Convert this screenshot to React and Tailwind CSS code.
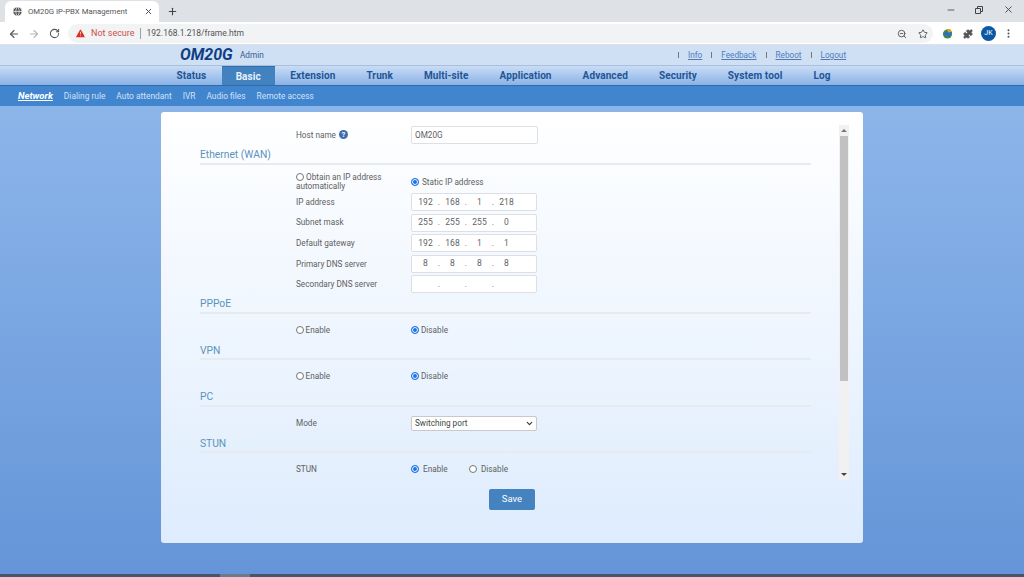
import React from 'react';
import { ArrowLeft, ArrowRight, RotateCw, ZoomOut, Star, Puzzle, X, Plus, Minus, EllipsisVertical, Globe, TriangleAlert, ChevronDown } from 'lucide-react';

const navItems = ['Status', 'Basic', 'Extension', 'Trunk', 'Multi-site', 'Application', 'Advanced', 'Security', 'System tool', 'Log'];
const subItems = ['Dialing rule', 'Auto attendant', 'IVR', 'Audio files', 'Remote access'];

const Radio = ({ checked }) => (
  <span className={`inline-block align-[-1px] w-[6px] h-[6px] rounded-full shrink-0 box-content border ${checked ? 'border-[#1a73e8] bg-[#1a73e8] shadow-[inset_0_0_0_1px_#ffffff]' : 'border-[#767676] bg-white'}`} />
);

const Heading = ({ title }) => (
  <div className="h-[20.5px] border-b-2 border-[#e6ebf0] text-[10.25px] text-[#5b93bd] leading-[21px]">{title}</div>
);

const IpInput = ({ parts }) => (
  <div className="w-[126px] h-[18px] border border-[#dcdfe6] rounded-[2px] bg-white grid grid-cols-[27px_27px_27px_27px] text-[8.5px] text-[#606266]">
    {parts.map((part, i) => (
      <div key={i} className="relative flex items-center justify-center">
        {part}
        {i < 3 && <span className="absolute right-[-1px]">.</span>}
      </div>
    ))}
  </div>
);

const Row = ({ label, className, children }) => (
  <div className={`flex items-center pl-[96px] ${className}`}>
    <div className="w-[115px]">{label}</div>
    {children}
  </div>
);

const ToggleRow = () => (
  <div className="h-[26px] pt-[6px] flex items-center pl-[96px]">
    <label className="w-[115px] flex items-center gap-[1.5px]"><Radio /> Enable</label>
    <label className="flex items-center gap-[2px]"><Radio checked /> Disable</label>
  </div>
);

const ipRows = [
  ['IP address', ['192', '168', '1', '218']],
  ['Subnet mask', ['255', '255', '255', '0']],
  ['Default gateway', ['192', '168', '1', '1']],
  ['Primary DNS server', ['8', '8', '8', '8']],
  ['Secondary DNS server', ['', '', '', '']],
];

export default function App() {
  return (
    <div className="w-[1024px] h-[577px] overflow-hidden flex flex-col font-['Roboto',sans-serif] text-[8.2px] text-[#606060]">
      {/* Browser tabs */}
      <div className="h-[22px] bg-[#dee1e6] flex items-end shrink-0">
        <div className="ml-[5px] w-[154px] h-[21px] bg-white rounded-t-[6px] flex items-center pl-[7px] text-[7.75px] text-[#555]">
          <Globe className="w-[11px] h-[11px] text-white fill-[#555] mr-[5px]" strokeWidth={1.5} />
          <span className="flex-1 whitespace-nowrap">OM20G IP-PBX Management</span>
          <X className="w-[9px] h-[9px] mr-[6px] text-[#444]" strokeWidth={2.5} />
        </div>
        <Plus className="w-[11px] h-[11px] ml-[8px] mb-[5px] text-[#444]" strokeWidth={2.5} />
        <div className="ml-auto flex items-center self-start mt-[4px] mr-[10px] text-[#444]">
          <Minus className="w-[10px] h-[10px]" />
          <svg viewBox="0 0 10 10" className="w-[10px] h-[10px] ml-[18px]" fill="none" stroke="#444" strokeWidth="1">
            <path d="M1.5 3.5h5v5h-5zM3.5 3V1.5h5v5H7" />
          </svg>
          <X className="w-[11px] h-[11px] ml-[19px]" />
        </div>
      </div>

      {/* Browser toolbar */}
      <div className="h-[23px] pt-[1px] bg-white flex items-center shrink-0 border-b border-[#dfe1e5] text-[#555]">
        <ArrowLeft className="w-[12px] h-[12px] ml-[8px]" strokeWidth={2.2} />
        <ArrowRight className="w-[12px] h-[12px] ml-[8px] text-[#b4b6b9]" strokeWidth={2.2} />
        <RotateCw className="w-[11px] h-[11px] ml-[9px]" strokeWidth={2.2} />
        <div className="ml-[8px] w-[865px] h-[19px] rounded-full bg-[#f1f3f4] flex items-center pl-[7px] text-[9px]">
          <TriangleAlert className="w-[11px] h-[11px] text-white fill-[#d93025]" strokeWidth={1.5} />
          <span className="text-[#c9524a] ml-[5px]">Not secure</span>
          <span className="w-px h-[11px] bg-[#9aa0a6] ml-[5px] mr-[6px]" />
          <span className="text-[8.5px] text-[#555]">192.168.1.218/frame.htm</span>
          <ZoomOut className="ml-auto w-[10px] h-[10px]" strokeWidth={2.2} />
          <Star className="w-[10px] h-[10px] ml-[11px] mr-[5px]" strokeWidth={2.2} />
        </div>
        <svg viewBox="0 0 12 12" className="w-[11px] h-[11px] ml-[9px]">
          <circle cx="6" cy="6.5" r="5" fill="#3f8f3a" />
          <path d="M1 7l5-4 5 1-3 6z" fill="#2f6fc4" />
          <path d="M5 1h4l2 3-4 1z" fill="#e0a030" />
        </svg>
        <Puzzle className="w-[10px] h-[10px] ml-[10px] fill-[#555]" />
        <div className="ml-[8px] w-[15px] h-[15px] rounded-full bg-[#0b57a4] text-white text-[7px] flex items-center justify-center">JK</div>
        <EllipsisVertical className="w-[11px] h-[11px] ml-[7px]" strokeWidth={2.5} />
      </div>

      {/* App header */}
      <div className="h-[21px] bg-[#cfe0f5] flex items-center pl-[180px] shrink-0 border-b border-[#a9bfdc]">
        <span className="w-[60px] text-[16px] font-bold italic text-[#0f3f82] leading-none">OM20G</span>
        <span className="w-[438px] text-[#38598f]">Admin</span>
        <div className="flex items-center text-[#4f7cb8]">
          {['Info', 'Feedback', 'Reboot', 'Logout'].map((link) => (
            <React.Fragment key={link}>
              <span className="w-px h-[6px] bg-[#777] mr-[9px]" />
              <a className="underline mr-[9px]">{link}</a>
            </React.Fragment>
          ))}
        </div>
      </div>

      {/* Main nav */}
      <div className="h-[19px] bg-gradient-to-b from-[#c9dcf5] to-[#8ab2e6] flex pl-[161px] shrink-0 text-[10px] font-bold tracking-[0.1px] text-[#1f5596]">
        {navItems.map((name) => (
          <div key={name} className={`flex items-center justify-center ${name === 'Basic' ? 'px-[14px] bg-[#4282bf] text-[#e8f1fb] border-t border-[#2f6fb0]' : 'px-[15.5px]'}`}>
            {name}
          </div>
        ))}
      </div>

      {/* Sub nav */}
      <div className="h-[21px] bg-[#4285cf] border-t border-[#2f6cae] flex items-center pl-[18px] gap-[11px] shrink-0 text-[8.4px] text-[#cfe2f7]">
        <span className="text-[9.5px] font-bold italic underline text-white">Network</span>
        {subItems.map((item) => <span key={item}>{item}</span>)}
      </div>

      {/* Page */}
      <div className="flex-1 bg-gradient-to-b from-[#8cb5ea] to-[#6595d8] pt-[6px] pl-[161px]">
        <div className="w-[702px] h-[431px] rounded-[3px] bg-gradient-to-b from-white to-[#deecfd] pt-[13px]">
          <div className="flex h-[355px]">
            <div className="w-[678px] pt-[1px] pl-[39px] pr-[28px] overflow-hidden">
              <Row label={<span className="flex items-center gap-[3px]">Host name <span className="w-[9px] h-[9px] rounded-full bg-[#3f6cb0] text-white text-[7px] font-bold flex items-center justify-center">?</span></span>} className="h-[18px]">
                <div className="w-[127px] h-[18px] border border-[#dcdfe6] rounded-[2px] bg-white flex items-center pl-[3px] text-[#606266]">OM20G</div>
              </Row>

              <Heading title="Ethernet (WAN)" />
              <div className="flex items-center pl-[96px] mt-[8.5px] h-[18px]">
                <div className="w-[115px] leading-[9.5px] pr-[4px]">
                  <Radio /> Obtain an IP address automatically
                </div>
                <label className="flex items-center gap-[3px]"><Radio checked /> Static IP address</label>
              </div>
              <div className="flex flex-col gap-[2.6px] mt-[2px]">
                {ipRows.map(([label, parts]) => (
                  <Row key={label} label={label}>
                    <IpInput parts={parts} />
                  </Row>
                ))}
              </div>

              <Heading title="PPPoE" />
              <ToggleRow />
              <Heading title="VPN" />
              <ToggleRow />
              <Heading title="PC" />
              <Row label="Mode" className="h-[26px] pt-[7px]">
                <div className="w-[126px] h-[15px] border border-[#c9c9c9] rounded-[2px] bg-white flex items-center justify-between pl-[3px] pr-[2px] text-[#444]">
                  Switching port
                  <ChevronDown className="w-[9px] h-[9px] text-[#333]" strokeWidth={3} />
                </div>
              </Row>
              <Heading title="STUN" />
              <div className="flex items-center pl-[96px] h-[32px]">
                <div className="w-[115px]">STUN</div>
                <label className="w-[58px] flex items-center gap-[4px]"><Radio checked /> Enable</label>
                <label className="flex items-center gap-[4px]"><Radio /> Disable</label>
              </div>
            </div>

            {/* Scrollbar */}
            <div className="w-[10px] bg-[#f1f1f1] flex flex-col items-center">
              <div className="h-[11px] flex items-center">
                <div className="w-0 h-0 border-x-[3px] border-x-transparent border-b-[3px] border-b-[#777]" />
              </div>
              <div className="w-[8px] h-[245px] bg-[#c1c1c1]" />
              <div className="mt-auto h-[11px] flex items-center">
                <div className="w-0 h-0 border-x-[3px] border-x-transparent border-t-[3px] border-t-[#444]" />
              </div>
            </div>
          </div>

          <div className="flex justify-center mt-[9px]">
            <button className="w-[46px] h-[21px] rounded-[2px] bg-[#4582c0] text-white text-[9.5px]">Save</button>
          </div>
        </div>
      </div>

      {/* Desktop taskbar edge */}
      <div className="h-[3px] bg-[#46556b] shrink-0 pl-[220px]">
        <div className="w-[30px] h-[3px] bg-[#6d7a8c]" />
      </div>
    </div>
  );
}
